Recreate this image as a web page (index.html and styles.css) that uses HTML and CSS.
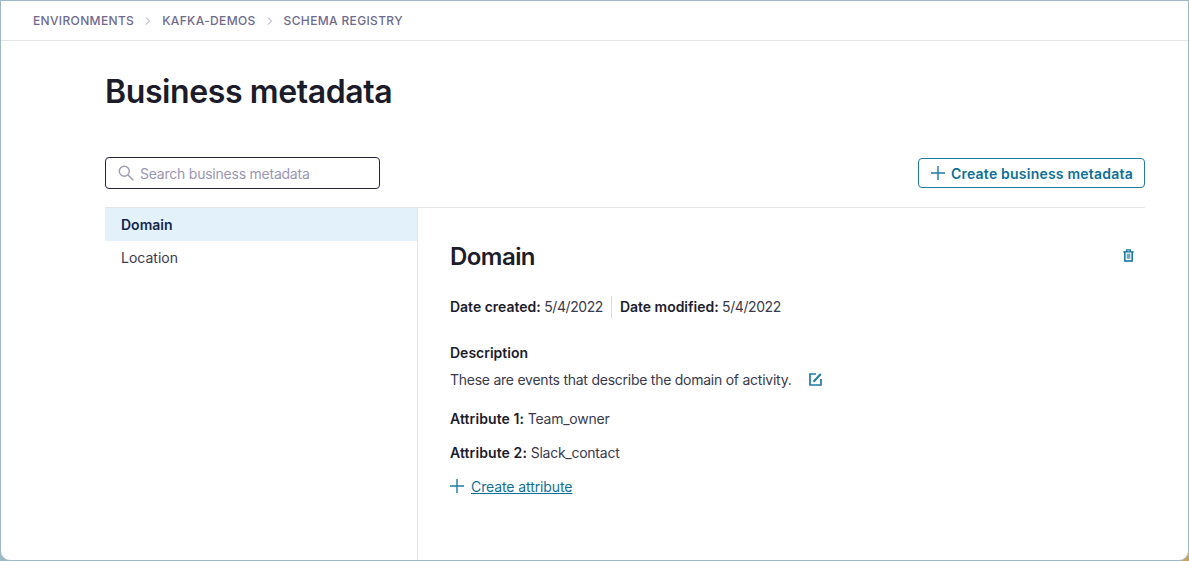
FILE: index.html
```html
<!DOCTYPE html>
<html lang="en">
<head>
<meta charset="utf-8">
<title>Business metadata</title>
<link rel="stylesheet" href="styles.css">
</head>
<body>
<div class="frame">
  <nav class="crumbs">
    <a>ENVIRONMENTS</a>
    <svg class="chev" viewBox="0 0 8 10"><path d="M2 1.500 5.500 5 2 8.500" fill="none" stroke="currentColor" stroke-width="1"/></svg>
    <a>KAFKA-DEMOS</a>
    <svg class="chev" viewBox="0 0 8 10"><path d="M2 1.500 5.500 5 2 8.500" fill="none" stroke="currentColor" stroke-width="1"/></svg>
    <a>SCHEMA REGISTRY</a>
  </nav>
  <main class="page">
    <h1 class="title">Business metadata</h1>
    <div class="toolbar">
      <div class="search">
        <svg class="search-icon" viewBox="0 0 16 16"><circle cx="6.300" cy="6.300" r="5" fill="none" stroke="currentColor" stroke-width="1.400"/><path d="M10 10l5.300 5.300" fill="none" stroke="currentColor" stroke-width="1.600"/></svg>
        <span class="placeholder">Search business metadata</span>
      </div>
      <button class="create-btn">
        <svg class="plus" viewBox="0 0 14 14"><path d="M7 0v14M0 7h14" fill="none" stroke="currentColor" stroke-width="1.400"/></svg>
        Create business metadata
      </button>
    </div>
    <div class="split">
      <aside class="side">
        <div class="side-item active">Domain</div>
        <div class="side-item">Location</div>
      </aside>
      <section class="detail">
        <div class="detail-head">
          <h2 class="detail-title">Domain</h2>
          <svg class="trash" viewBox="0 0 12 14"><path d="M4 2.500V.8h4v1.700M.3 3h11.400" fill="none" stroke="currentColor" stroke-width="1.300"/><path d="M2 3v10h8V3" fill="none" stroke="currentColor" stroke-width="1.600"/><rect x="4" y="5" width="4" height="5.500" fill="currentColor" opacity=".6"/></svg>
        </div>
        <div class="dates">
          <span class="date-item"><b>Date created:</b> 5/4/2022</span>
          <span class="date-item second"><b>Date modified:</b> 5/4/2022</span>
        </div>
        <h3 class="desc-label">Description</h3>
        <div class="desc">
          <span>These are events that describe the domain of activity.</span>
          <svg class="edit" viewBox="0 0 13 13"><path d="M7 1H1v11h11V6" fill="none" stroke="currentColor" stroke-width="1.700"/><path d="M4.500 8.800 11.800 1" fill="none" stroke="currentColor" stroke-width="2"/></svg>
        </div>
        <p class="attr first"><b>Attribute 1:</b> Team_owner</p>
        <p class="attr"><b>Attribute 2:</b> Slack_contact</p>
        <div class="add-attr">
          <svg class="plus" viewBox="0 0 14 14"><path d="M7 0v14M0 7h14" fill="none" stroke="currentColor" stroke-width="1.400"/></svg>
          <a class="link">Create attribute</a>
        </div>
      </section>
    </div>
  </main>
</div>
</body>
</html>
```

FILE: styles.css
```css
* { box-sizing: border-box; }
html, body { margin: 0; height: 100%; }
body {
  font-family: Inter, "Liberation Sans", sans-serif;
  color: #1d1d2b;
  background: linear-gradient(90deg, #9db9c6 50%, #c9a25e 50%);
  overflow: hidden;
}
.frame {
  height: 561px;
  width: 1189px;
  background: #fff;
  border: 1px solid #9db9c6;
  border-radius: 0 0 10px 10px;
  display: flex;
  flex-direction: column;
}
.crumbs {
  height: 40px;
  flex: none;
  display: flex;
  align-items: center;
  padding-left: 32px;
  border-bottom: 1px solid #e4e4eb;
  color: #6f6a8f;
  font-size: 12px;
  font-weight: 500;
  letter-spacing: 0.35px;
}
.chev { width: 8px; height: 10px; margin: 0 10px 0 10px; color: #a3a0b8; }
.page { flex: 1; padding: 0 43px 0 104px; display: flex; flex-direction: column; min-height: 0; }
.title {
  margin: 29px 0 0;
  font-size: 32px;
  line-height: 44px;
  font-weight: 600;
  letter-spacing: -0.4px;
  color: #1b1b29;
}
.toolbar {
  margin-top: 43px;
  height: 44px;
  flex: none;
  display: flex;
  justify-content: space-between;
  align-items: flex-start;
}
.search {
  width: 275px;
  height: 32px;
  border: 1.500px solid #26263a;
  border-radius: 4px;
  display: flex;
  align-items: center;
  padding-left: 12px;
  gap: 6px;
}
.search-icon { width: 16px; height: 16px; color: #9e9bb0; }
.placeholder { font-size: 14px; color: #9a97b2; letter-spacing: -0.23px; }
.create-btn {
  width: 227px;
  height: 30px;
  margin-top: 1px;
  border: 1.500px solid #1f7ba3;
  border-radius: 4px;
  background: #fff;
  color: #0f6f98;
  font: 600 14px Inter, "Liberation Sans", sans-serif;
  letter-spacing: 0.22px;
  display: flex;
  align-items: center;
  justify-content: center;
  gap: 6px;
  padding: 0 0 0 1px;
}
.plus { width: 14px; height: 14px; color: #1f7ba3; flex: none; }
.split {
  flex: 1;
  min-height: 0;
  display: flex;
  border-top: 1px solid #e4e4eb;
  margin-top: 6px;
}
.side { width: 313px; flex: none; border-right: 1px solid #e4e4eb; }
.side-item {
  height: 33px;
  padding-left: 16px;
  display: flex;
  align-items: center;
  font-size: 14px;
  color: #3a3a4c;
}
.side-item.active { background: #e3f2fa; color: #14264f; font-weight: 600; }
.detail { flex: 1; padding: 31px 11px 0 32px; font-size: 14px; color: #3a3a4c; letter-spacing: -0.25px; }
.detail b { font-weight: 600; color: #1d1d2b; letter-spacing: 0.1px; }
.detail-head { display: flex; justify-content: space-between; align-items: center; height: 34px; }
.detail-title { margin: 0; font-size: 24px; font-weight: 600; color: #1d1d2b; letter-spacing: -0.55px; }
.trash { width: 11px; height: 13px; color: #0f6f98; margin-top: -2px; }
.dates { margin-top: 23px; display: flex; align-items: stretch; height: 22px; line-height: 22px; letter-spacing: -0.42px; }
.detail .dates b { letter-spacing: -0.02px; }
.date-item.second { border-left: 1px solid #d9d9e2; margin-left: 8px; padding-left: 8px; }
.desc-label { margin: 25px 0 0; font-size: 14px; line-height: 20px; font-weight: 600; color: #1d1d2b; letter-spacing: 0; }
.desc { margin-top: 6px; display: flex; align-items: center; gap: 18px; height: 20px; }
.edit { width: 13px; height: 13px; color: #1f7ba3; }
.attr { margin: 14px 0 0; line-height: 20px; }
.attr.first { margin-top: 20px; }
.add-attr { margin-top: 13px; display: flex; align-items: center; gap: 7px; height: 20px; }
.link { color: #0f6f98; text-decoration: underline; letter-spacing: -0.1px; }
```
